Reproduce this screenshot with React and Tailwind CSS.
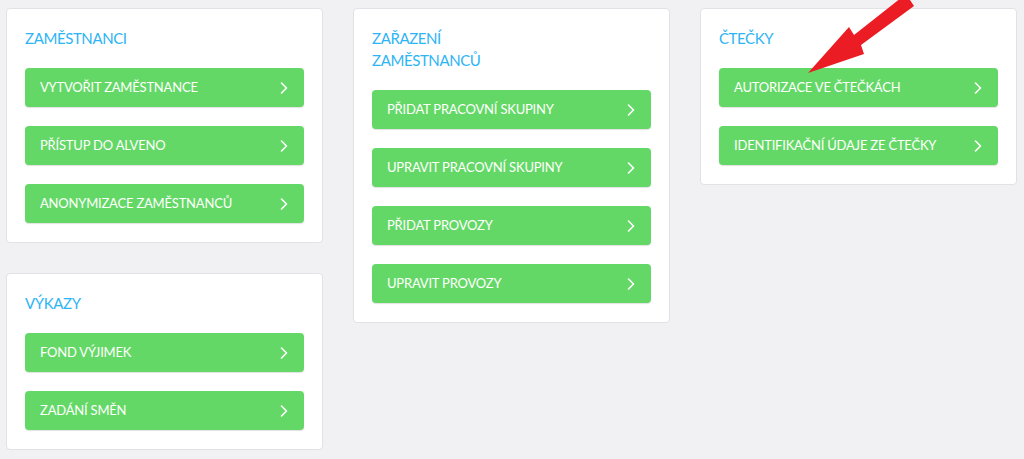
import React from 'react';

const sections = [
  [
    { title: 'Zaměstnanci', items: ['Vytvořit zaměstnance', 'Přístup do Alveno', 'Anonymizace zaměstnanců'] },
    { title: 'Výkazy', items: ['Fond výjimek', 'Zadání směn'] },
  ],
  [
    {
      title: 'Zařazení zaměstnanců',
      items: ['Přidat pracovní skupiny', 'Upravit pracovní skupiny', 'Přidat provozy', 'Upravit provozy'],
    },
  ],
  [{ title: 'Čtečky', items: ['Autorizace ve čtečkách', 'Identifikační údaje ze čtečky'] }],
];

const Chevron = () => (
  <svg width="8" height="12" viewBox="0 0 8 12" fill="none" className="shrink-0">
    <path d="M1.5 1l5 5-5 5" stroke="white" strokeWidth="1.6" strokeLinecap="round" strokeLinejoin="round" />
  </svg>
);

const Card = ({ title, items }) => (
  <div className="bg-white border border-[#e2e2e6] rounded-[4px] px-[18px] pt-[18px] pb-[19px]">
    <h2 className="max-w-[150px] text-[15px] leading-[22px] tracking-[-0.4px] text-[#2db4f4] uppercase mb-[19px]">
      {title}
    </h2>
    <div className="flex flex-col gap-[19px]">
      {items.map((item) => (
        <button
          key={item}
          className="h-[39px] w-full flex items-center justify-between pl-[15px] pr-[16px] bg-[#64d866] rounded-[4px] shadow-[0_1px_1px_rgba(0,0,0,0.12)] text-white text-[13px] tracking-[-0.2px] uppercase text-left"
        >
          <span>{item}</span>
          <Chevron />
        </button>
      ))}
    </div>
  </div>
);

export default function App() {
  return (
    <div className="relative w-[1024px] h-[459px] overflow-hidden bg-[#f1f1f4] pl-[6px] pt-[8px] font-['Lato','Liberation_Sans',sans-serif]">
      <div className="flex gap-[30px] items-start">
        {sections.map((col, i) => (
          <div key={i} className="w-[317px] flex flex-col gap-[30px]">
            {col.map((s) => (
              <Card key={s.title} {...s} />
            ))}
          </div>
        ))}
      </div>
      {/* red annotation arrow */}
      <svg className="absolute left-0 top-0 pointer-events-none" width="1024" height="459">
        <polygon points="808,73 849,27 854,35 906,-6 914,6 861,45 864,54" fill="#ec1c24" />
      </svg>
    </div>
  );
}
